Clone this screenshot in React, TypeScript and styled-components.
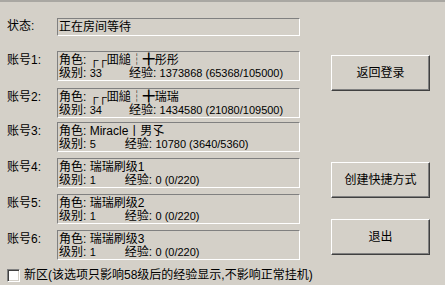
import React from "react";
import styled, { createGlobalStyle } from "styled-components";

const Global = createGlobalStyle`
  html, body { margin: 0; padding: 0; background: #d4d0c8; }
  body { width: 445px; height: 285px; overflow: hidden; }
  * { box-sizing: border-box; }
`;

const Window = styled.div`
  width: 445px;
  height: 285px;
  background: #d4d0c8;
  border-top: 2px solid #a9a7a2;
  font-family: "Liberation Sans", "Noto Sans CJK SC", sans-serif;
  font-size: 12px;
  line-height: 13px;
  color: #000;
  display: flex;
  flex-direction: column;
`;

const Main = styled.div`
  display: flex;
  flex-direction: row;
`;

const Form = styled.div`
  display: flex;
  flex-direction: column;
  padding: 16px 0 0 7px;
  width: 300px;
`;

const Row = styled.div<{ $top: number }>`
  display: grid;
  grid-template-columns: 50px 243px;
  margin-top: ${(p) => p.$top}px;
`;

const Label = styled.div<{ $pad: number }>`
  padding-top: ${(p) => p.$pad}px;
  white-space: nowrap;
`;

const Box = styled.div<{ $h: number; $pad: number }>`
  height: ${(p) => p.$h}px;
  border-top: 1px solid #808080;
  border-left: 1px solid #808080;
  border-bottom: 1px solid #ffffff;
  border-right: 1px solid #ffffff;
  padding: ${(p) => p.$pad}px 0 0 1px;
  white-space: nowrap;
  overflow: hidden;
`;

const Line = styled.div`
  height: 13px;
  line-height: 13px;
  white-space: pre;
`;

const Num = styled.span`
  font-size: 11px;
`;

const ExpPart = styled.span<{ $gap: number }>`
  margin-left: ${(p) => p.$gap}px;
`;

const Buttons = styled.div`
  display: flex;
  flex-direction: column;
  margin-left: 31px;
  padding-top: 53px;
`;

const Button = styled.button<{ $top: number }>`
  width: 99px;
  height: 36px;
  margin-top: ${(p) => p.$top}px;
  background: #d4d0c8;
  border-top: 1px solid #ffffff;
  border-left: 1px solid #ffffff;
  border-bottom: 1px solid #404040;
  border-right: 1px solid #404040;
  box-shadow: inset -1px -1px 0 #808080;
  font-family: "Liberation Sans", "Noto Sans CJK SC", sans-serif;
  font-size: 12px;
  line-height: 13px;
  color: #000;
  padding: 0;
  cursor: default;
`;

const CheckRow = styled.label`
  display: flex;
  align-items: center;
  gap: 4px;
  margin: 9px 0 0 7px;
  white-space: nowrap;
`;

const CheckBox = styled.span`
  width: 13px;
  height: 13px;
  background: #ffffff;
  border-top: 1px solid #808080;
  border-left: 1px solid #808080;
  border-bottom: 1px solid #ffffff;
  border-right: 1px solid #ffffff;
  box-shadow: inset 1px 1px 0 #404040, inset -1px -1px 0 #d4d0c8;
  flex: none;
`;

type Account = { role: string; level: string; exp: string; gap: number; top: number };

const accounts: Account[] = [
  { role: "┌┌囬縋┆╋彤彤", level: "33", exp: "1373868 (65368/105000)", gap: 27, top: 15 },
  { role: "┌┌囬縋┆╋瑞瑞", level: "34", exp: "1434580 (21080/109500)", gap: 27, top: 7 },
  { role: "Miracle丨男孓", level: "5", exp: "10780 (3640/5360)", gap: 29, top: 4 },
  { role: "瑞瑞刷级1", level: "1", exp: "0 (0/220)", gap: 29, top: 6 },
  { role: "瑞瑞刷级2", level: "1", exp: "0 (0/220)", gap: 29, top: 6 },
  { role: "瑞瑞刷级3", level: "1", exp: "0 (0/220)", gap: 29, top: 6 },
];

export default function App() {
  return (
    <>
      <Global />
      <Window>
        <Main>
          <Form>
            <Row $top={0}>
              <Label $pad={2}>状态:</Label>
              <Box $h={18} $pad={2}>
                <Line>正在房间等待</Line>
              </Box>
            </Row>
            {accounts.map((a, i) => (
              <Row key={i} $top={a.top}>
                <Label $pad={3}>账号{i + 1}:</Label>
                <Box $h={30} $pad={2}>
                  <Line>{`角色: ${a.role}`}</Line>
                  <Line>
                    {"级别: "}
                    <Num>{a.level}</Num>
                    <ExpPart $gap={a.gap}>
                      {"经验: "}
                      <Num>{a.exp}</Num>
                    </ExpPart>
                  </Line>
                </Box>
              </Row>
            ))}
          </Form>
          <Buttons>
            <Button $top={0}>返回登录</Button>
            <Button $top={71}>创建快捷方式</Button>
            <Button $top={21}>退出</Button>
          </Buttons>
        </Main>
        <CheckRow>
          <CheckBox />
          <span>新区(该选项只影响58级后的经验显示,不影响正常挂机)</span>
        </CheckRow>
      </Window>
    </>
  );
}
